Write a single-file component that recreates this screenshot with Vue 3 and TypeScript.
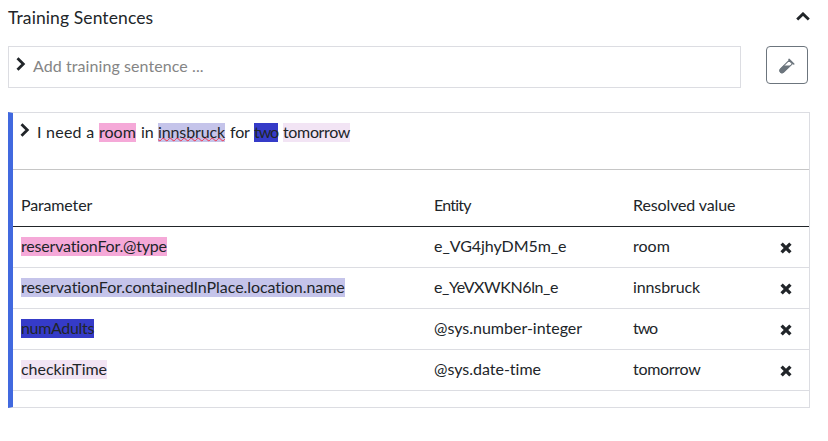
<script setup lang="ts">
interface Token {
  text: string
  width: number
  tracking: number
  tone?: string
  misspelled?: boolean
}

interface Row {
  name: Token
  entity: Token
  value: Token
}

const tokens: Token[] = [
  { text: 'I need a', width: 57, tracking: 0.24 },
  { text: 'room', width: 37, tracking: 0, tone: 'pink' },
  { text: 'in', width: 12, tracking: 0 },
  { text: 'innsbruck', width: 67, tracking: -0.12, tone: 'lilac', misspelled: true },
  { text: 'for', width: 19, tracking: -0.2 },
  { text: 'two', width: 24, tracking: -1.1, tone: 'indigo' },
  { text: 'tomorrow', width: 67, tracking: -0.35, tone: 'blush' },
]

const rows: Row[] = [
  {
    name: { text: 'reservationFor.@type', width: 146, tracking: -0.19, tone: 'pink' },
    entity: { text: 'e_VG4jhyDM5m_e', width: 133, tracking: -0.05 },
    value: { text: 'room', width: 37, tracking: 0 },
  },
  {
    name: { text: 'reservationFor.containedInPlace.location.name', width: 324, tracking: -0.06, tone: 'lilac' },
    entity: { text: 'e_YeVXWKN6ln_e', width: 125, tracking: -0.4 },
    value: { text: 'innsbruck', width: 67, tracking: -0.12 },
  },
  {
    name: { text: 'numAdults', width: 73, tracking: -0.33, tone: 'indigo' },
    entity: { text: '@sys.number-integer', width: 149, tracking: 0 },
    value: { text: 'two', width: 24, tracking: -1.1 },
  },
  {
    name: { text: 'checkinTime', width: 86, tracking: -0.04, tone: 'blush' },
    entity: { text: '@sys.date-time', width: 108, tracking: 0 },
    value: { text: 'tomorrow', width: 67, tracking: -0.3 },
  },
]

const fit = (t: Token) => ({ width: `${t.width}px`, letterSpacing: `${t.tracking}px` })
</script>

<template>
  <main class="panel">
    <header class="heading">
      <h2>Training Sentences</h2>
      <svg class="caret" width="14" height="9" viewBox="0 0 14 9"><path d="M1.2 7.6 7 1.9l5.8 5.7" /></svg>
    </header>

    <div class="entry">
      <div class="field">
        <svg class="chevron" width="10" height="14" viewBox="0 0 10 14"><path d="M1.5 1.2 7.3 7l-5.8 5.8" /></svg>
        <span class="placeholder">Add training sentence ...</span>
      </div>
      <button class="tool" type="button" aria-label="Test">
        <svg width="16" height="16" viewBox="0 0 16 16">
          <path class="glass" d="M10.1 2.4 1.5 10.9a2.2 2.2 0 0 0 3.2 3.2L13.4 5.8Z" />
          <path class="liquid" d="M4.6 7.6h7.1l-7.1 6.9a2.4 2.4 0 0 1-3.5-3.4Z" />
          <path class="rim" d="m10 1.4 4.8 4.6" />
        </svg>
      </button>
    </div>

    <section class="card">
      <div class="sentence">
        <svg class="chevron" width="10" height="14" viewBox="0 0 10 14"><path d="M1.5 1.2 7.3 7l-5.8 5.8" /></svg>
        <span
          v-for="t in tokens"
          :key="t.text"
          class="text"
          :class="[t.tone, { misspelled: t.misspelled }]"
          :style="fit(t)"
        >{{ t.text }}</span>
      </div>

      <div class="row head">
        <span class="text param">Parameter</span>
        <span class="text entity">Entity</span>
        <span class="text value">Resolved value</span>
      </div>
      <div v-for="r in rows" :key="r.name.text" class="row">
        <div><span class="text" :class="r.name.tone" :style="fit(r.name)">{{ r.name.text }}</span></div>
        <div><span class="text" :style="fit(r.entity)">{{ r.entity.text }}</span></div>
        <div><span class="text" :style="fit(r.value)">{{ r.value.text }}</span></div>
        <svg class="remove" width="12" height="12" viewBox="0 0 12 12"><path d="m1.6 1.6 8.8 8.8M10.4 1.6l-8.8 8.8" /></svg>
      </div>
    </section>
  </main>
</template>

<style>
body {
  background: #fff;
}
</style>

<style scoped>
.panel {
  box-sizing: border-box;
  width: 828px;
  height: 441px;
  padding: 6px 18px 0 8px;
  font: 16px/17px Lato, sans-serif;
  font-variant-ligatures: none;
  color: #212529;
}
svg {
  display: block;
  flex: none;
  fill: none;
}
.heading {
  display: flex;
  justify-content: space-between;
  height: 40px;
}
h2 {
  margin: 0;
  font-size: 17.5px;
  font-weight: 400;
  line-height: 24px;
  letter-spacing: 0.1px;
}
.caret {
  margin-top: 6px;
}
.caret path,
.chevron path {
  stroke: #212529;
  stroke-width: 2.8;
}
.entry {
  display: flex;
  justify-content: space-between;
  align-items: flex-start;
  height: 66px;
  padding-right: 2px;
}
.field {
  display: flex;
  box-sizing: border-box;
  width: 733px;
  height: 42px;
  padding: 10px 7px;
  border: 1px solid #dcdde2;
}
.placeholder {
  margin-left: 7px;
  color: #858585;
  letter-spacing: 0.08px;
}
.tool {
  display: flex;
  align-items: center;
  justify-content: center;
  box-sizing: border-box;
  width: 42px;
  height: 38px;
  padding: 0;
  background: #fff;
  border: 1px solid #6c757d;
  border-radius: 4px;
}
.tool svg {
  margin-top: 2px;
}
.glass {
  stroke: #6c757d;
  stroke-width: 1.1;
}
.liquid {
  fill: #6c757d;
}
.rim {
  stroke: #6c757d;
  stroke-width: 1.5;
  stroke-linecap: round;
}
.card {
  box-sizing: border-box;
  height: 296px;
  border: 1px solid #dcdde2;
  border-left: 5px solid #4169df;
}
.sentence {
  display: flex;
  gap: 5px;
  box-sizing: border-box;
  height: 57px;
  padding: 10px 7px;
  border-bottom: 1px solid #c6c6c6;
}
.sentence .chevron {
  margin-right: 2px;
}
.text {
  display: inline-block;
  height: 19px;
  white-space: nowrap;
}
.pink {
  background: #f5a9d8;
}
.lilac {
  background: #c5c4ea;
}
.indigo {
  background: #353bc8;
}
.blush {
  background: #f2e4f4;
}
.misspelled {
  text-decoration: underline wavy #f0324b 1px;
  text-decoration-skip-ink: none;
  text-underline-offset: -1px;
}
.row {
  display: grid;
  grid-template-columns: 413px 199px 147px 12px;
  box-sizing: border-box;
  height: 41px;
  padding: 10px 0 0 8px;
  border-bottom: 1px solid #dcdde2;
}
.row > div {
  display: flex;
}
.head {
  height: 57px;
  padding-top: 26px;
  border-bottom-color: #212529;
}
.param {
  letter-spacing: -0.15px;
}
.entity {
  letter-spacing: -0.8px;
}
.value {
  letter-spacing: -0.12px;
}
.remove {
  margin-top: 5px;
}
.remove path {
  stroke: #212529;
  stroke-width: 3.3;
}
</style>
